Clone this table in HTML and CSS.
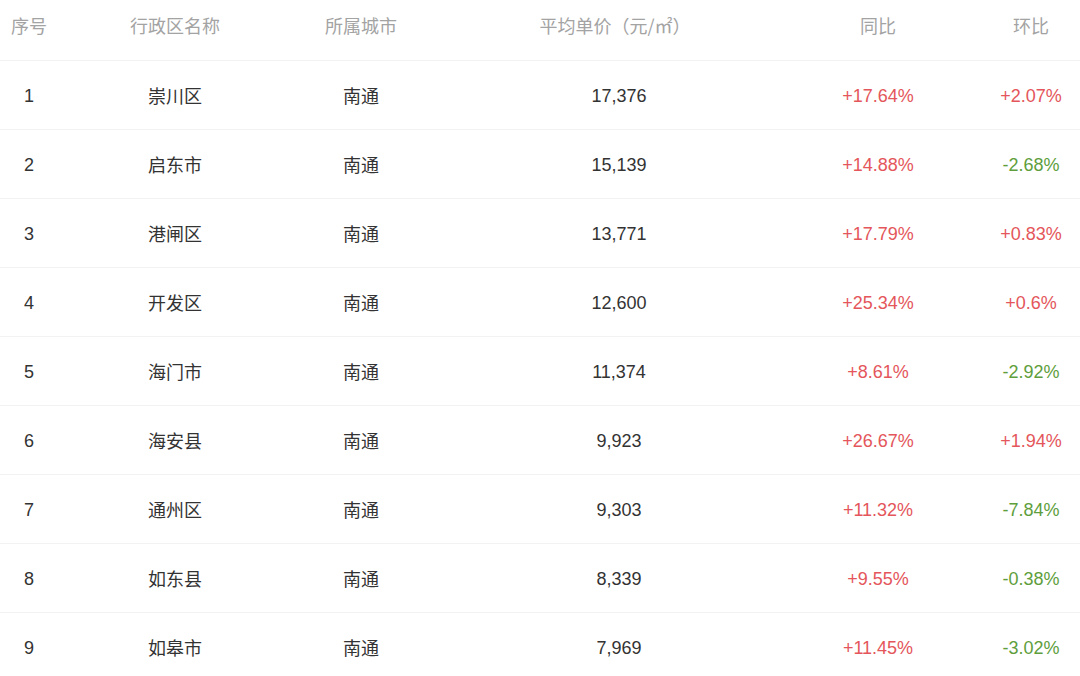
FILE: index.html
```html
<!DOCTYPE html>
<html lang="zh-CN">
<head>
<meta charset="utf-8">
<title>南通房价</title>
<link rel="stylesheet" href="styles.css">
</head>
<body>
<div class="wrap">
<table class="tbl">
<colgroup>
<col class="c1"><col class="c2"><col class="c3"><col class="c4"><col class="c5"><col class="c6">
</colgroup>
<thead>
<tr><th>序号</th><th>行政区名称</th><th>所属城市</th><th>平均单价（元/㎡）</th><th>同比</th><th>环比</th></tr>
</thead>
<tbody>
<tr><td class="num">1</td><td>崇川区</td><td>南通</td><td class="num price">17,376</td><td class="num up">+17.64%</td><td class="num up">+2.07%</td></tr>
<tr><td class="num">2</td><td>启东市</td><td>南通</td><td class="num price">15,139</td><td class="num up">+14.88%</td><td class="num down">-2.68%</td></tr>
<tr><td class="num">3</td><td>港闸区</td><td>南通</td><td class="num price">13,771</td><td class="num up">+17.79%</td><td class="num up">+0.83%</td></tr>
<tr><td class="num">4</td><td>开发区</td><td>南通</td><td class="num price">12,600</td><td class="num up">+25.34%</td><td class="num up">+0.6%</td></tr>
<tr><td class="num">5</td><td>海门市</td><td>南通</td><td class="num price">11,374</td><td class="num up">+8.61%</td><td class="num down">-2.92%</td></tr>
<tr><td class="num">6</td><td>海安县</td><td>南通</td><td class="num price">9,923</td><td class="num up">+26.67%</td><td class="num up">+1.94%</td></tr>
<tr><td class="num">7</td><td>通州区</td><td>南通</td><td class="num price">9,303</td><td class="num up">+11.32%</td><td class="num down">-7.84%</td></tr>
<tr><td class="num">8</td><td>如东县</td><td>南通</td><td class="num price">8,339</td><td class="num up">+9.55%</td><td class="num down">-0.38%</td></tr>
<tr><td class="num">9</td><td>如皋市</td><td>南通</td><td class="num price">7,969</td><td class="num up">+11.45%</td><td class="num down">-3.02%</td></tr>
</tbody>
</table>
</div>
</body>
</html>
```

FILE: styles.css
```css
html, body {
  margin: 0;
  padding: 0;
  background: #ffffff;
}
body {
  width: 1080px;
  height: 676px;
  overflow: hidden;
  font-family: "Liberation Sans", "Noto Sans CJK SC", sans-serif;
}
.wrap {
  width: 1080px;
  overflow: hidden;
}
.tbl {
  width: 1106px;
  border-collapse: collapse;
  table-layout: fixed;
}
.c1 { width: 58px; }
.c2 { width: 234px; }
.c3 { width: 138px; }
.c4 { width: 370px; }
.c5 { width: 156px; }
.c6 { width: 150px; }
.tbl th {
  height: 60px;
  padding: 13px 0 0 0;
  box-sizing: border-box;
  vertical-align: top;
  font-weight: normal;
  font-size: 18px;
  line-height: 24px;
  color: #a3a3a3;
  text-align: center;
  border-bottom: 1px solid #f2f2f2;
  font-family: "Noto Sans CJK SC", "Liberation Sans", sans-serif;
}
.tbl td {
  height: 69.1px;
  padding: 0;
  box-sizing: border-box;
  text-align: center;
  vertical-align: middle;
  font-size: 18px;
  line-height: 24px;
  color: #333333;
  border-bottom: 1px solid #f2f2f2;
  font-family: "Noto Sans CJK SC", "Liberation Sans", sans-serif;
}
.tbl td.num {
  font-family: "Liberation Sans", "Noto Sans CJK SC", sans-serif;
  font-size: 18px;
  padding-top: 2px;
}
.tbl td.price {
  padding-left: 8px;
}
.tbl td.up { color: #e4565b; }
.tbl td.down { color: #5e9e3c; }
```
